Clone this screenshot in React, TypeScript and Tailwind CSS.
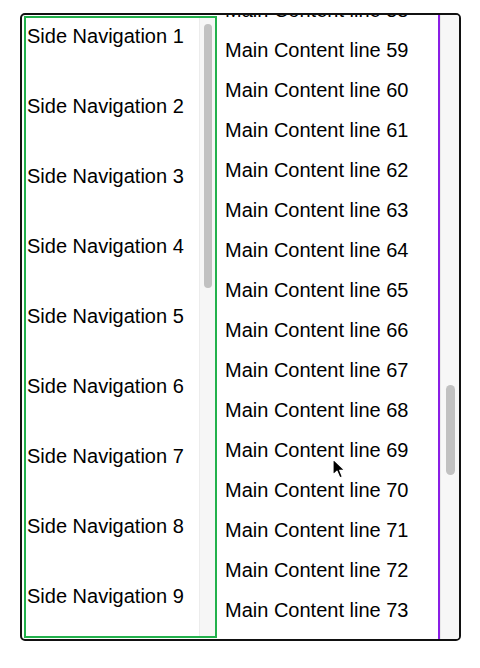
import { useLayoutEffect, useRef } from "react";

const sideItems = Array.from({ length: 9 }, (_, i) => i + 1);
const mainLines = Array.from({ length: 16 }, (_, i) => i + 58);

const Cursor = () => (
  <svg
    className="absolute left-[332px] top-[458px]"
    width="14"
    height="22"
    viewBox="0 0 14 22"
  >
    <path
      d="M1 1 L1 17 L5 13.2 L7.8 19.8 L10.4 18.7 L7.7 12.3 L12.8 12.3 Z"
      fill="#000"
      stroke="#fff"
      strokeWidth="1.2"
      strokeLinejoin="round"
    />
  </svg>
);

export default function App() {
  const mainRef = useRef<HTMLDivElement>(null);

  useLayoutEffect(() => {
    if (mainRef.current) mainRef.current.scrollTop = 25;
  }, []);

  return (
    <div
      className="relative min-h-[668px] bg-white pl-[20px] pt-[13px] text-black"
      style={{ fontFamily: '"Liberation Sans", Arial, sans-serif' }}
    >
      <div className="flex h-[628px] w-[441px] overflow-hidden rounded-[5px] border-2 border-[#111]">
        {/* content area */}
        <div className="flex min-w-0 flex-1 border-r-2 border-[#8a1ee6] pl-0.5">
          {/* side nav */}
          <aside className="my-px flex w-[193px] shrink-0 border-2 border-[#22b14c]">
            <ul className="flex-1 overflow-hidden pl-px">
              {sideItems.map((n) => (
                <li key={n} className="h-[70px] text-[20px] leading-[36px] whitespace-nowrap">
                  Side Navigation {n}
                </li>
              ))}
            </ul>
            <div className="flex w-[16px] shrink-0 justify-center border-l border-[#ececec] bg-[#f6f6f6] pt-[6px]">
              <div className="h-[264px] w-[8px] rounded-full bg-[#c1c1c1]" />
            </div>
          </aside>

          {/* main content */}
          <div ref={mainRef} className="min-w-0 flex-1 overflow-hidden pl-2">
            {mainLines.map((n) => (
              <p key={n} className="h-[40px] text-[20px] leading-[40px] whitespace-nowrap">
                Main Content line {n}
              </p>
            ))}
            <div className="h-[40px]" />
          </div>
        </div>

        {/* outer scrollbar */}
        <div className="flex w-[19px] shrink-0 justify-center border-l border-[#e8e8e8] bg-[#f7f7f7] pt-[370px]">
          <div className="h-[90px] w-[9px] rounded-full bg-[#c1c1c1]" />
        </div>
      </div>
      <Cursor />
    </div>
  );
}
